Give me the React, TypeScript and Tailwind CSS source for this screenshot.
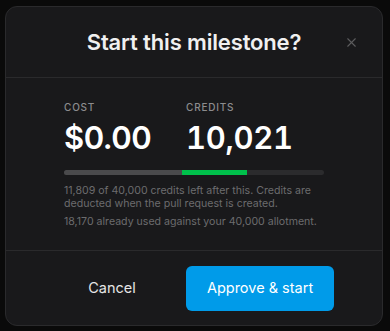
import { X } from "lucide-react"

const App = () => {
  return (
    <div className="w-[390px] h-[331px] bg-[#0a0a0a] pt-[6px] px-[5px] font-['Inter',sans-serif]">
      <div className="w-[378px] h-[320px] rounded-[12px] border border-[#2a2a2c] bg-[#19191b] flex flex-col">
        <div className="relative h-[71px] flex items-center justify-center border-b border-[#2a2a2c]">
          <h2 className="text-[22px] font-semibold text-[#f0f0f0] tracking-[-0.15px]">
            Start this milestone?
          </h2>
          <button className="absolute right-[23px] top-[28px] text-[#5c5c5e]">
            <X className="w-[15px] h-[15px]" strokeWidth={1.75} />
          </button>
        </div>
        <div className="flex-1 pl-[58px] pr-[59px] pt-[23px]">
          <div className="flex">
            <div className="w-[122px]">
              <div className="text-[10px] font-medium tracking-[0.8px] text-[#8c8c8e] leading-[12px]">
                COST
              </div>
              <div className="mt-[7px] text-[31px] font-semibold text-white leading-[36px] tracking-[-0.5px]">
                $0.00
              </div>
            </div>
            <div>
              <div className="text-[10px] font-medium tracking-[0.8px] text-[#8c8c8e] leading-[12px]">
                CREDITS
              </div>
              <div className="mt-[7px] text-[31px] font-semibold text-white leading-[36px] tracking-[-0.3px] tabular-nums">
                10,021
              </div>
            </div>
          </div>
          <div className="mt-[14px] h-[5px] w-[260px] rounded-full bg-[#2b2b2d] flex overflow-hidden">
            <div className="w-[118px] bg-[#4a4a4c]" />
            <div className="w-[65px] bg-[#00c04b]" />
          </div>
          <p className="mt-[9px] text-[10.6px] leading-[13px] text-[#6c6c6e]">
            11,809 of 40,000 credits left after this. Credits are deducted when the pull request is created.
          </p>
          <p className="mt-[5px] text-[10.6px] leading-[13px] text-[#6c6c6e]">
            18,170 already used against your 40,000 allotment.
          </p>
        </div>
        <div className="h-[75px] border-t border-[#2a2a2c] flex items-center pl-[32px]">
          <button className="w-[148px] h-[45px] text-[14.5px] text-[#e6e6e6]">Cancel</button>
          <button className="w-[148px] h-[45px] rounded-[6px] bg-[#009be9] text-[14.5px] text-white">
            Approve &amp; start
          </button>
        </div>
      </div>
    </div>
  )
}

export default App
